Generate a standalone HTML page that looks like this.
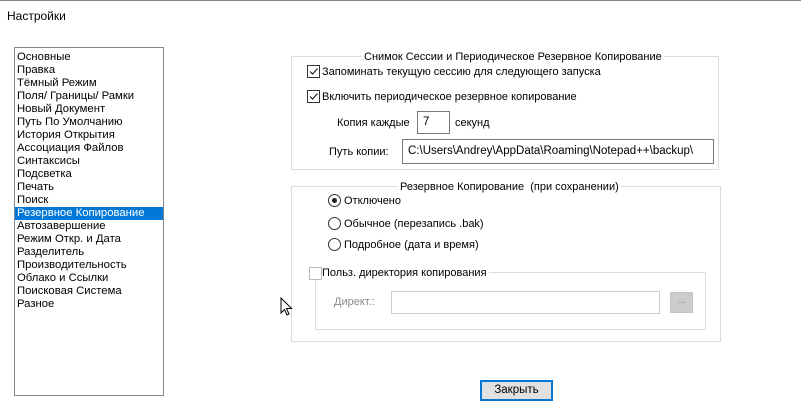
<!DOCTYPE html>
<html><head><meta charset="utf-8"><style>
*{margin:0;padding:0;box-sizing:border-box}
body{width:801px;height:410px;background:#fff;position:relative;overflow:hidden;font-family:"Liberation Sans",sans-serif;font-size:11px;color:#000}
.a{position:absolute;white-space:nowrap}
.list{position:absolute;left:14px;top:47px;width:150px;height:349px;border:1px solid #828790;background:#fff}
.list div{height:13px;line-height:13px;padding-left:2px;font-size:11.3px}
.sel{background:#0078d7;color:#fff}
.grp{position:absolute;border:1px solid #dcdcdc}
.gt{position:absolute;background:#fff;padding:0 2px;line-height:13px;top:-6px}
.cb{position:absolute;width:13px;height:13px;border:1px solid #333;background:#fff}
.rb{position:absolute;width:13px;height:13px;border:1px solid #333;border-radius:50%;background:#fff}
.inp{position:absolute;border:1px solid #7a7a7a;background:#fff;line-height:20px;padding-left:5px;font-size:11.5px}
</style></head><body>
<div class="a" style="left:0;top:0;width:801px;height:1px;background:#888"></div>
<div class="a" style="left:7px;top:9px;font-size:12px">Настройки</div>
<div class="list" style="padding-top:3px">
<div>Основные</div><div>Правка</div><div>Тёмный Режим</div><div>Поля/ Границы/ Рамки</div><div>Новый Документ</div><div>Путь По Умолчанию</div><div>История Открытия</div><div>Ассоциация Файлов</div><div>Синтаксисы</div><div>Подсветка</div><div>Печать</div><div>Поиск</div><div class="sel">Резервное Копирование</div><div>Автозавершение</div><div>Режим Откр. и Дата</div><div>Разделитель</div><div>Производительность</div><div>Облако и Ссылки</div><div>Поисковая Система</div><div>Разное</div>
</div>

<div class="grp" style="left:291px;top:56px;width:428px;height:114px">
<div class="gt" style="left:70px">Снимок Сессии и Периодическое Резервное Копирование</div>
</div>
<div class="cb" style="left:307px;top:65px"><svg width="11" height="11" style="position:absolute;left:0;top:0"><path d="M2 5.5 L4.5 8 L9.5 2.5" stroke="#222" stroke-width="1.2" fill="none"/></svg></div>
<div class="a" style="left:322px;top:66px">Запоминать текущую сессию для следующего запуска</div>
<div class="cb" style="left:307px;top:90px"><svg width="11" height="11" style="position:absolute;left:0;top:0"><path d="M2 5.5 L4.5 8 L9.5 2.5" stroke="#222" stroke-width="1.2" fill="none"/></svg></div>
<div class="a" style="left:322px;top:91px">Включить периодическое резервное копирование</div>
<div class="a" style="left:337px;top:117px">Копия каждые</div>
<div class="inp" style="left:417px;top:111px;width:33px;height:23px;line-height:21px">7</div>
<div class="a" style="left:455px;top:117px">секунд</div>
<div class="a" style="left:329px;top:146px">Путь копии:</div>
<div class="inp" style="left:402px;top:139px;width:312px;height:25px;line-height:23px">C:\Users\Andrey\AppData\Roaming\Notepad++\backup\</div>

<div class="grp" style="left:291px;top:186px;width:430px;height:156px">
<div class="gt" style="left:106px">Резервное Копирование&nbsp; (при сохранении)</div>
</div>
<div class="rb" style="left:328px;top:194px"><div style="position:absolute;left:3px;top:3px;width:5px;height:5px;border-radius:50%;background:#222"></div></div>
<div class="a" style="left:344px;top:195px">Отключено</div>
<div class="rb" style="left:328px;top:217px"></div>
<div class="a" style="left:344px;top:218px">Обычное (перезапись .bak)</div>
<div class="rb" style="left:328px;top:238px"></div>
<div class="a" style="left:344px;top:239px">Подробное (дата и время)</div>

<div class="grp" style="left:315px;top:272px;width:391px;height:58px"></div>
<div class="cb" style="left:309px;top:267px;border-color:#bbb"></div>
<div class="a" style="left:322px;top:267px;background:#fff;padding-right:2px">Польз. директория копирования</div>
<div class="a" style="left:334px;top:296px;color:#888">Директ.:</div>
<div class="a" style="left:391px;top:291px;width:269px;height:23px;border:1px solid #ccc"></div>
<div class="a" style="left:670px;top:292px;width:23px;height:21px;background:#ccc;border:1px solid #c4c4c4;color:#888;text-align:center;line-height:16px;font-size:10px">...</div>

<svg class="a" style="left:280px;top:297px" width="14" height="20"><path d="M1 1 L1 16 L4.5 12.5 L7 18 L9 17 L6.5 11.5 L11.5 11.5 Z" fill="#fff" stroke="#000" stroke-width="1"/></svg>

<div class="a" style="left:480px;top:380px;width:73px;height:21px;background:#e1e1e1;border:2px solid #0078d7;text-align:center;line-height:17px;font-size:11.5px">Закрыть</div>
</body></html>
